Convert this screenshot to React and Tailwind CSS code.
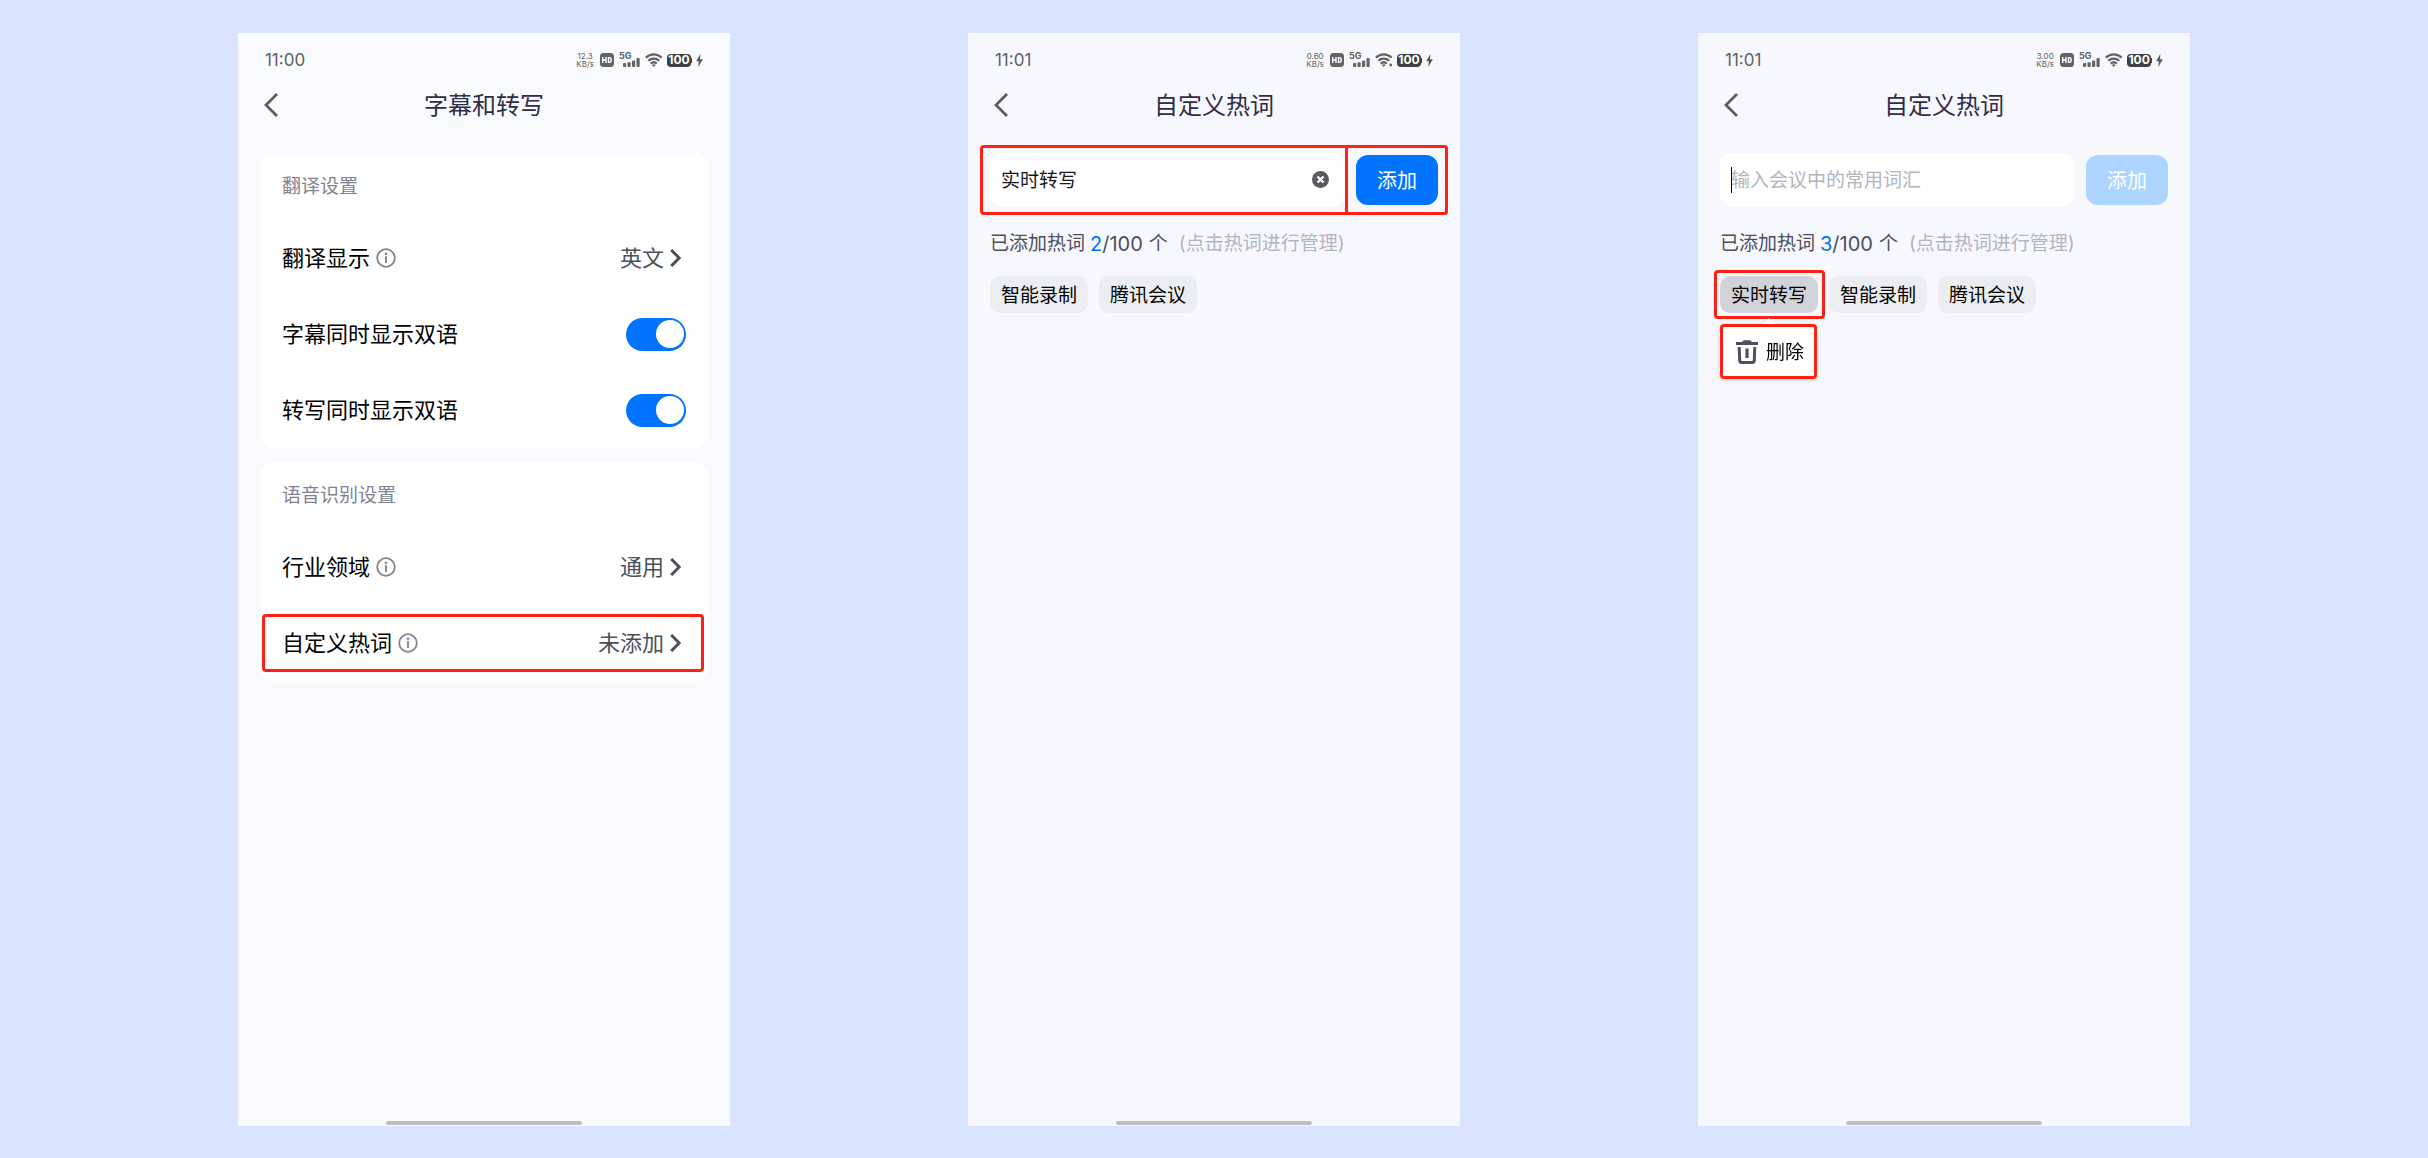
import React, { useState } from "react";

function Highlight({ className }) {
  return (
    <span
      aria-hidden="true"
      className={`pointer-events-none absolute rounded-[4px] border-3 border-[#ff2113] ${className}`}
    />
  );
}

function HdIcon() {
  return (
    <svg width="14" height="14" viewBox="0 0 14 14" aria-hidden="true">
      <rect width="14" height="14" rx="3.5" fill="#626367" />
      <path
        d="M2.700 4v6M6 4v6M2.700 7H6M8.500 4.650v4.700h1c1 0 1.600-.6 1.600-1.500V6.150c0-.9-.6-1.500-1.600-1.500z"
        fill="none"
        stroke="#fff"
        strokeWidth="1.400"
      />
    </svg>
  );
}

function SignalIcon() {
  return (
    <svg width="17" height="9" viewBox="0 0 17 9" fill="#626367" aria-hidden="true">
      <rect x="0" y="5" width="3.200" height="4" rx="1" />
      <rect x="4.500" y="4.300" width="3.200" height="4.700" rx="1" />
      <rect x="9" y="2.600" width="3.200" height="6.400" rx="1" />
      <rect x="13.500" y="0" width="3.200" height="9" rx="1" />
    </svg>
  );
}

function WifiIcon({ dot }) {
  return (
    <svg width="18" height="14" viewBox="0 0 18 14" aria-hidden="true">
      <g fill="none" stroke="#626367" strokeWidth="2.200">
        <path d="M.9 4.600C5.400.3 12.100.3 16.600 4.600" />
        <path d="M3.300 7.700c3.100-2.900 7.800-2.900 10.900 0" />
        <path d="M5.700 10.600c1.800-1.600 4.300-1.600 6.100 0" />
      </g>
      <path d="M6.900 12c1.100-.9 2.600-.9 3.700 0L8.750 14z" fill="#626367" />
      {dot && <circle cx="15.700" cy="12" r="1.400" fill="#626367" />}
    </svg>
  );
}

function BoltIcon() {
  return (
    <svg width="7" height="13" viewBox="0 0 7 13" aria-hidden="true">
      <path d="M4.300 0 .2 7.300h2.600L2.300 13 6.800 5.300H4z" fill="#56575b" />
    </svg>
  );
}

function StatusBar({ time, speed, wifiDot }) {
  return (
    <div className="flex h-[52px] items-center justify-between px-[27px] pt-[2px] text-[#5f6064]">
      <span className="text-[17px] leading-none">{time}</span>
      <div className="flex items-center">
        <span className="mr-[6px] flex flex-col items-center text-[8px] leading-[8px]">
          <span>{speed}</span>
          <span>KB/s</span>
        </span>
        <HdIcon />
        <span className="relative ml-[5px] flex h-[14px] w-[21px] items-end justify-end">
          <span className="absolute -top-px left-0 text-[9px] leading-[8px] font-bold">5G</span>
          <SignalIcon />
        </span>
        <span className="ml-[5px]">
          <WifiIcon dot={wifiDot} />
        </span>
        <span className="ml-[4px] flex h-[13px] w-[24px] items-center justify-center rounded-[4px] bg-[#404144] text-[12px] leading-none font-bold text-white">
          100
        </span>
        <span className="mr-[4px] h-[5px] w-px bg-[#404144]" />
        <BoltIcon />
      </div>
    </div>
  );
}

function Phone({ time, speed, wifiDot, title, tint, children }) {
  return (
    <section className={`flex min-w-0 flex-col ${tint}`}>
      <StatusBar time={time} speed={speed} wifiDot={wifiDot} />
      <header className="relative flex h-[40px] items-center justify-center">
        <button type="button" aria-label="返回" className="absolute left-[26px]">
          <svg width="14" height="24" viewBox="0 0 14 24" fill="none" stroke="#5b5c61" strokeWidth="2.800" aria-hidden="true">
            <path d="M13 1 2 12l11 11" />
          </svg>
        </button>
        <h1 className="pt-[2px] text-[24px] leading-[40px] text-[#2f2d48]">{title}</h1>
      </header>
      <main className="flex-1 px-[22px] pt-[28px]">{children}</main>
      <div className="mx-auto mb-px h-[4px] w-2/5 rounded-full bg-[#bdbdc1]" />
    </section>
  );
}

function InfoIcon() {
  return (
    <svg width="20" height="20" viewBox="0 0 20 20" aria-hidden="true">
      <circle cx="10" cy="10" r="8.800" fill="none" stroke="#7f8391" strokeWidth="1.800" />
      <circle cx="10" cy="5.700" r="1.300" fill="#7f8391" />
      <path d="M10 8.200v6.800" stroke="#7f8391" strokeWidth="1.900" />
    </svg>
  );
}

function Card({ heading, children }) {
  return (
    <section className="rounded-[14px] bg-white">
      <h2 className="px-[22px] text-[19px] leading-[67px] text-[#7f8391]">{heading}</h2>
      {children}
    </section>
  );
}

function LinkRow({ label, value, highlighted }) {
  return (
    <div className="relative flex h-[76px] items-center justify-between pr-[27px] pl-[22px] text-[22px]">
      <span className="flex items-center gap-[6px] text-black">
        {label}
        <button type="button" aria-label={`${label}说明`}>
          <InfoIcon />
        </button>
      </span>
      <button type="button" className="flex items-center gap-[6px] text-[#4c4f5c]">
        {value}
        <svg width="11" height="18" viewBox="0 0 11 18" fill="none" stroke="#4c4f5c" strokeWidth="3" aria-hidden="true">
          <path d="m1.200 1 8 8-8 8" />
        </svg>
      </button>
      {highlighted && <Highlight className="inset-y-[9px] right-[4px] left-[2px]" />}
    </div>
  );
}

function SwitchRow({ label }) {
  const [on, setOn] = useState(true);
  return (
    <label className="flex h-[76px] items-center justify-between px-[22px] text-[22px] text-black">
      {label}
      <input
        type="checkbox"
        role="switch"
        checked={on}
        onChange={() => setOn(!on)}
        className="flex h-[33px] w-[60px] appearance-none items-center rounded-full bg-[#d0d3dc] p-[2px] before:block before:size-[28px] before:rounded-full before:bg-white checked:justify-end checked:bg-[#0073ff]"
      />
    </label>
  );
}

function AddForm({ id, initial, highlighted, focused }) {
  const [text, setText] = useState(initial);
  return (
    <form className="relative flex items-center gap-[11px]" onSubmit={(e) => e.preventDefault()}>
      <div className="relative flex h-[53px] min-w-0 flex-1 items-center rounded-[12px] bg-white pr-[16px] pl-[11px]">
        <input
          id={id}
          type="text"
          aria-label="热词"
          value={text}
          placeholder="输入会议中的常用词汇"
          onChange={(e) => setText(e.target.value)}
          className="w-full min-w-0 flex-1 bg-transparent pt-[4px] text-[19px] text-[#17181c] outline-none placeholder:text-[#b1b4c1]"
        />
        {focused && <span aria-hidden="true" className="absolute left-[11px] h-[26px] w-px bg-black" />}
        {text && (
          <button type="button" aria-label="清空" onClick={() => setText("")}>
            <svg width="17" height="17" viewBox="0 0 17 17" aria-hidden="true">
              <circle cx="8.500" cy="8.500" r="8.500" fill="#595b62" />
              <path d="m5.500 5.500 6 6m0-6-6 6" stroke="#fff" strokeWidth="2.400" />
            </svg>
          </button>
        )}
      </div>
      <button
        type="submit"
        disabled={!text}
        className="h-[50px] w-[82px] rounded-[12px] bg-[#0073ff] pt-[2px] text-[20px] text-white disabled:bg-[#add3ff]"
      >
        添加
      </button>
      {highlighted && (
        <>
          <Highlight className="-inset-x-[10px] -top-[8px] -bottom-[9px]" />
          <Highlight className="-top-[8px] -right-[10px] -bottom-[9px] w-[103px]" />
        </>
      )}
    </form>
  );
}

function Summary({ count }) {
  return (
    <p className="mt-[23px] flex items-center pt-px text-[19px] leading-[28px] whitespace-nowrap text-[#4c4f5c]">
      已添加热词
      <span className="ml-[5px] text-[20px] text-[#0073ff]">{count}</span>
      <span className="text-[20px]">/100</span>
      <span className="ml-[6px]">个</span>
      <span className="ml-[11px] text-[#b1b4c1]">(点击热词进行管理)</span>
    </p>
  );
}

function Chip({ word, active, children }) {
  return (
    <li className="relative">
      <button
        type="button"
        className={`h-[37px] rounded-[10px] px-[11px] pt-[4px] text-[19px] text-black ${active ? "bg-[#d2d3d9]" : "bg-[#ecedf1]"}`}
      >
        {word}
      </button>
      {children}
    </li>
  );
}

function DeleteMenu() {
  return (
    <div className="absolute top-[48px] left-0 drop-shadow-sm">
      <span className="absolute -top-[4px] left-[43px] size-[12px] rotate-45 rounded-[2px] bg-white" />
      <button
        type="button"
        className="relative flex h-[55px] w-[97px] items-center gap-[8px] rounded-[4px] bg-white pl-[16px] text-[19px] whitespace-nowrap text-black"
      >
        <svg width="22" height="24" viewBox="0 0 22 24" fill="none" stroke="#4d505e" aria-hidden="true">
          <path d="M0 3.500h22" strokeWidth="3" />
          <path d="M6.500 2.500 8 1h6l1.500 1.500z" fill="#4d505e" strokeWidth="1.400" />
          <path d="m3.200 7 .5 13.300c.1 1.400.8 2.200 2.200 2.200h10.200c1.400 0 2.100-.8 2.200-2.200L18.800 7" strokeWidth="3" />
          <path d="M11 8.500v9.500" strokeWidth="3.200" />
        </svg>
        <span className="pt-[4px]">删除</span>
        <Highlight className="inset-0" />
      </button>
    </div>
  );
}

export default function App() {
  return (
    <div
      lang="zh-CN"
      className="grid min-h-screen grid-cols-3 gap-x-[9.8vw] bg-[#d8e3ff] px-[9.8vw] pt-[33px] pb-[32px] font-[Inter,'Noto_Sans_CJK_SC',sans-serif]"
    >
      <Phone time="11:00" speed="12.3" title="字幕和转写" tint="bg-[#f9fafd]">
        <div className="flex flex-col gap-[14px]">
          <Card heading="翻译设置">
            <LinkRow label="翻译显示" value="英文" />
            <SwitchRow label="字幕同时显示双语" />
            <SwitchRow label="转写同时显示双语" />
          </Card>
          <Card heading="语音识别设置">
            <LinkRow label="行业领域" value="通用" />
            <LinkRow label="自定义热词" value="未添加" highlighted />
          </Card>
        </div>
      </Phone>

      <Phone time="11:01" speed="0.60" wifiDot title="自定义热词" tint="bg-[#f7f8fd]">
        <AddForm id="word-filled" initial="实时转写" highlighted />
        <Summary count={2} />
        <ul className="mt-[18px] flex flex-wrap gap-[11px]">
          <Chip word="智能录制" />
          <Chip word="腾讯会议" />
        </ul>
      </Phone>

      <Phone time="11:01" speed="3.00" title="自定义热词" tint="bg-[#f7f8fd]">
        <AddForm id="word-empty" initial="" focused />
        <Summary count={3} />
        <ul className="mt-[18px] flex flex-wrap gap-[11px]">
          <Chip word="实时转写" active>
            <Highlight className="-top-[6px] -right-[7px] -bottom-[6px] -left-[6px]" />
            <DeleteMenu />
          </Chip>
          <Chip word="智能录制" />
          <Chip word="腾讯会议" />
        </ul>
      </Phone>
    </div>
  );
}
